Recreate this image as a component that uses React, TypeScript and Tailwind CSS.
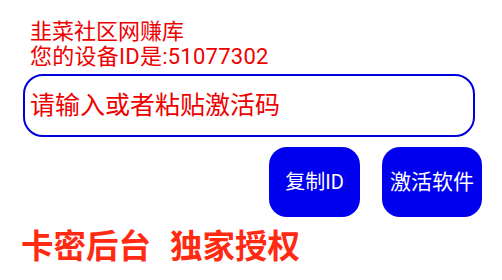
import React from "react";

export default function App() {
  const font = { fontFamily: "Roboto, 'Noto Sans CJK SC', sans-serif" };
  return (
    <div className="w-[502px] h-[280px] bg-white flex flex-col overflow-hidden" style={font}>
      <div className="pl-[30px] pt-[19px] text-[22px] leading-[25px] text-[#ee0000]">
        <div>韭菜社区网赚库</div>
        <div className="tracking-[0.25px]">您的设备ID是:51077302</div>
      </div>
      <div className="mt-[5px] ml-[23px] w-[452px] h-[63px] border-2 border-[#0000dd] rounded-[20px] flex items-center pl-[5px]">
        <span className="text-[25px] leading-none text-[#ee0000]">请输入或者粘贴激活码</span>
      </div>
      <div className="mt-[10px] flex justify-end gap-[22px] pr-[20px]">
        <button className="w-[91px] h-[70px] rounded-[18px] bg-[#0000ee] text-white text-[20px] leading-none flex items-center justify-center">
          复制ID
        </button>
        <button className="w-[100px] h-[70px] rounded-[18px] bg-[#0000ee] text-white text-[21px] leading-none flex items-center justify-center">
          激活软件
        </button>
      </div>
      <div className="mt-[14px] pl-[21px] text-[32.5px] leading-none font-bold text-[#ff2a12] flex gap-[19px]">
        <span>卡密后台</span>
        <span>独家授权</span>
      </div>
    </div>
  );
}
